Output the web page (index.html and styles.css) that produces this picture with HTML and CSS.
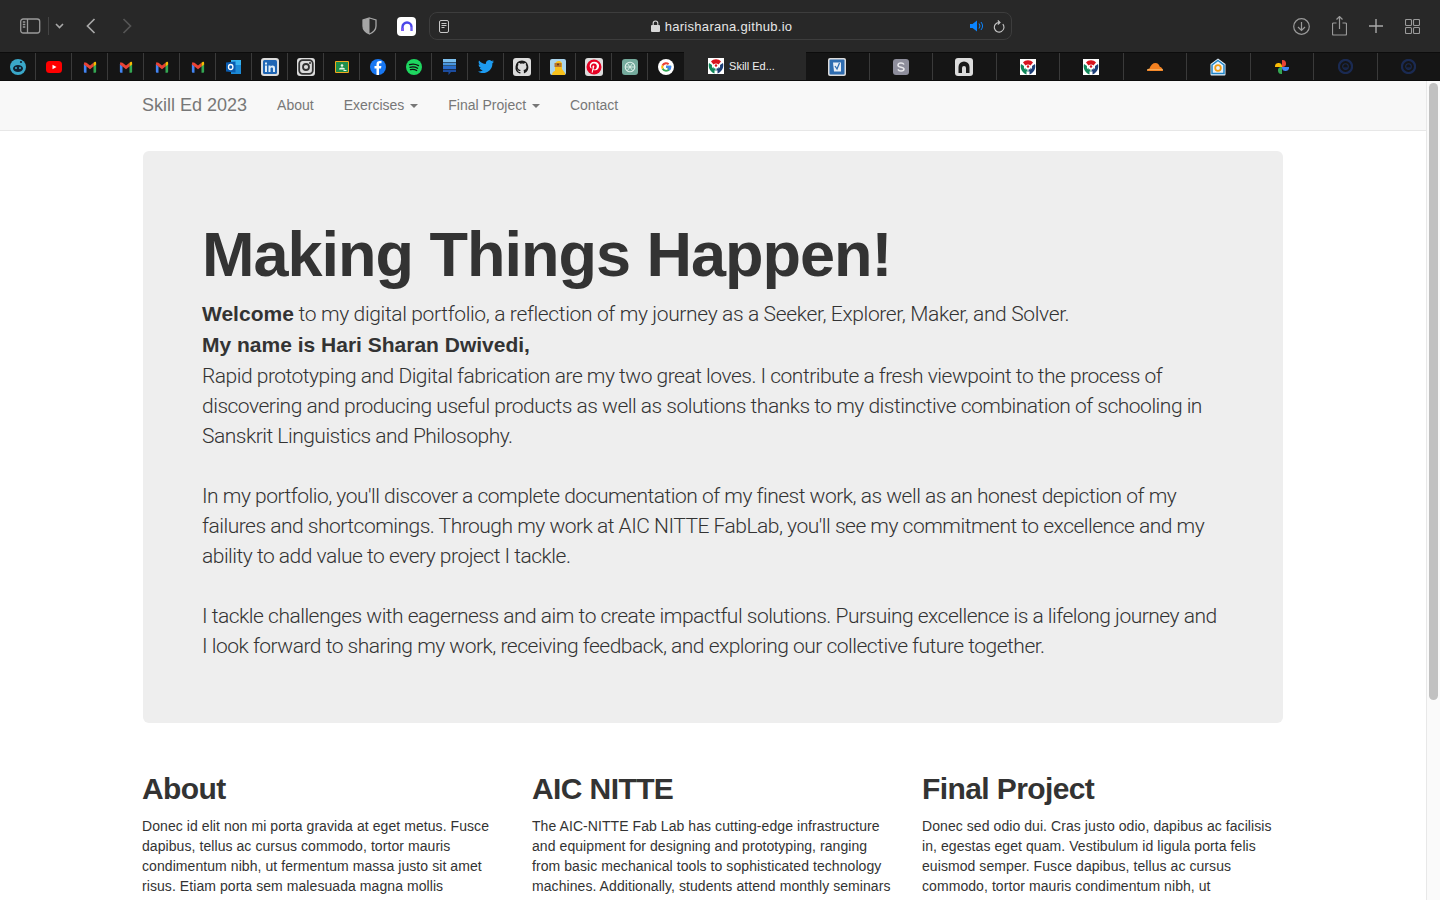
FILE: index.html
```html
<!DOCTYPE html>
<html>
<head>
<meta charset="utf-8">
<title>Skill Ed 2023</title>
<link rel="stylesheet" href="styles.css">
</head>
<body>

<svg class="defs" width="0" height="0">
  <symbol id="gmail" viewBox="0 0 16 13">
    <path d="M1 13V3l3 2.300V13H2a1 1 0 0 1-1-1z" fill="#4285f4"/>
    <path d="M12 13V5.300l3-2.300v9a1 1 0 0 1-1 1z" fill="#34a853"/>
    <path d="M1 3.500 1.500 1.200 4 1.700 8 4.800 12 1.700 12 6 8 9 4 6 1 3.500z" fill="#ea4335"/>
    <path d="M12 1.700 13.200.8c1-.6 1.800.2 1.800 1.200v1.500L12 6z" fill="#fbbc04"/>
  </symbol>
  <symbol id="fablab" viewBox="0 0 16 16">
    <rect width="16" height="16" fill="#fff"/>
    <path d="M3 3.500C5.500.5 10.500.5 13 3.500L10.500 6.500C9 5 7 5 5.500 6.500z" fill="#d8141f"/>
    <path d="M1 5C0 9 1.500 13.500 6.500 15.500V11.500C4.500 10.500 3.500 8.500 4 7z" fill="#10875a"/>
    <path d="M15 5C16 9 14.500 13.500 9.500 15.500V11.500C11.500 10.500 12.500 8.500 12 7z" fill="#1d3f78"/>
    <circle cx="8" cy="7.500" r="1.200" fill="#d8141f"/>
    <path d="M5 8.500C5.500 10 6.500 10.500 7.500 10.500V13C5.500 12.500 5 10.500 5 8.500z" fill="#10875a"/>
    <path d="M11 8.500C10.500 10 9.500 10.500 8.500 10.500V13C10.500 12.500 11 10.500 11 8.500z" fill="#1d3f78"/>
  </symbol>
  <symbol id="onepass" viewBox="0 0 16 16">
    <circle cx="8" cy="8" r="7" fill="none" stroke="#1a2a52" stroke-width="2.400"/>
    <circle cx="8" cy="8" r="3" fill="none" stroke="#1a2a52" stroke-width="1.200"/>
    <rect x="6" y="9" width="4" height="1.300" fill="#1a2a52"/>
  </symbol>
</svg>

<div class="toolbar">
  <svg class="sidebar-icon" width="21" height="16" viewBox="0 0 21 16" fill="none" stroke="#9a9a9a" stroke-width="1.300">
    <rect x=".7" y="1" width="19" height="14" rx="2.500"/>
    <path d="M7.500 1v14"/>
    <path d="M2.800 4h2.500M2.800 6.500h2.500M2.800 9h2.500"/>
  </svg>
  <span class="tool-divider"></span>
  <svg class="chevron-icon" width="9" height="6" viewBox="0 0 9 6" fill="none" stroke="#a8a8a8" stroke-width="1.600"><path d="M1 1l3.500 3.500L8 1"/></svg>
  <svg class="back-icon" width="10" height="16" viewBox="0 0 10 16" fill="none" stroke="#a8a8a8" stroke-width="1.700"><path d="M8.500 1 1.500 8l7 7"/></svg>
  <svg class="forward-icon" width="10" height="16" viewBox="0 0 10 16" fill="none" stroke="#555" stroke-width="1.700"><path d="M1.500 1l7 7-7 7"/></svg>
  <svg class="shield-icon" width="15" height="18" viewBox="0 0 15 18"><path d="M7.500 1 14 3v6c0 4-3 6.500-6.500 8C4 15.500 1 13 1 9V3z" fill="none" stroke="#a6a6a6" stroke-width="1.300"/><path d="M7.500 1 1 3v6c0 4 3 6.500 6.500 8z" fill="#a6a6a6"/></svg>
  <span class="ext-n">
    <svg width="14" height="12" viewBox="0 0 14 12" fill="none"><path d="M2.500 11V7a4.500 4.500 0 0 1 9 0" stroke="#4a46e8" stroke-width="2.400"/><path d="M11.500 7v4" stroke="#6a5cf0" stroke-width="2.400"/><rect x="1" y="8" width="3" height="3" fill="#7a5cf5"/></svg>
  </span>
  <div class="urlbar">
    <svg class="reader-icon" width="10" height="13" viewBox="0 0 10 13" fill="none" stroke="#c9c9c9" stroke-width="1"><rect x=".5" y=".5" width="9" height="12" rx="1.500"/><path d="M2.500 3.500h5M2.500 5.500h5M2.500 7.500h3"/></svg>
    <div class="url-text">
      <svg width="9" height="12" viewBox="0 0 9 12"><path d="M2.200 5V3.300a2.300 2.300 0 0 1 4.600 0V5" fill="none" stroke="#d8d8d8" stroke-width="1.100"/><rect y="5" width="9" height="7" rx="1" fill="#d8d8d8"/></svg>
      harisharana.github.io
    </div>
    <svg class="speaker-icon" width="14" height="12" viewBox="0 0 14 12"><path d="M0 4h2.500L7 .5v11L2.500 8H0z" fill="#0a84ff"/><path d="M9 3.500a4 4 0 0 1 0 5M11 2a6.500 6.500 0 0 1 0 8" fill="none" stroke="#0a84ff" stroke-width="1"/></svg>
    <svg class="reload-icon" width="12" height="13" viewBox="0 0 12 13" fill="none" stroke="#c9c9c9" stroke-width="1.100"><path d="M9.800 4.200A4.800 4.800 0 1 1 6 2.500"/><path d="M4.800.5 7 2.500 4.800 4.500"/></svg>
  </div>
  <div class="tool-right">
    <svg width="17" height="17" viewBox="0 0 17 17" fill="none" stroke="#9a9a9a" stroke-width="1.200"><circle cx="8.500" cy="8.500" r="7.800"/><path d="M8.500 4v8.500M5 9l3.500 3.500L12 9"/></svg>
    <svg width="15" height="20" viewBox="0 0 15 20" fill="none" stroke="#9a9a9a" stroke-width="1.200"><path d="M4.500 7H1.500a1 1 0 0 0-1 1v10a1 1 0 0 0 1 1h12a1 1 0 0 0 1-1V8a1 1 0 0 0-1-1h-3"/><path d="M7.500 13V1M4.500 3.500l3-3 3 3"/></svg>
    <svg width="14" height="14" viewBox="0 0 14 14" fill="none" stroke="#a8a8a8" stroke-width="1.400"><path d="M7 0v14M0 7h14"/></svg>
    <svg width="15" height="15" viewBox="0 0 15 15" fill="none" stroke="#9a9a9a" stroke-width="1.100"><rect x=".5" y=".5" width="6" height="6" rx="1"/><rect x="8.500" y=".5" width="6" height="6" rx="1"/><rect x=".5" y="8.500" width="6" height="6" rx="1"/><rect x="8.500" y="8.500" width="6" height="6" rx="1"/></svg>
  </div>
</div>

<div class="tabbar">
  <div class="pinned-tabs">
    <!-- pinned tabs -->
    <div class="pin"><svg width="16" height="16" viewBox="0 0 16 16"><circle cx="8" cy="8" r="8" fill="#3aa8c9"/><ellipse cx="8" cy="9.500" rx="5" ry="3.500" fill="#123"/><circle cx="6" cy="9" r="1" fill="#3aa8c9"/><circle cx="10" cy="9" r="1" fill="#3aa8c9"/><circle cx="11" cy="3" r="1.100" fill="#123"/></svg></div>
    <div class="pin"><svg width="16" height="12" viewBox="0 0 16 12"><rect width="16" height="12" rx="3.500" fill="#f00"/><path d="M6.500 3.800v4.400L10.500 6z" fill="#fff"/></svg></div>
    <div class="pin"><svg width="14" height="12"><use href="#gmail"/></svg></div>
    <div class="pin"><svg width="14" height="12"><use href="#gmail"/></svg></div>
    <div class="pin"><svg width="14" height="12"><use href="#gmail"/></svg></div>
    <div class="pin"><svg width="14" height="12"><use href="#gmail"/></svg></div>
    <div class="pin"><svg width="16" height="16" viewBox="0 0 16 16"><path d="M5 1h10v14H5z" fill="#1c8ad6"/><path d="M5 1h10v5H5z" fill="#36b2ee"/><path d="M0 3.500 9.500 2.500v11L0 12.500z" fill="#0a5cb0"/><ellipse cx="4.700" cy="8" rx="2.200" ry="2.500" fill="none" stroke="#fff" stroke-width="1.300"/></svg></div>
    <div class="pin"><svg width="18" height="18" viewBox="0 0 18 18"><rect width="18" height="18" rx="3" fill="#dcdcdc"/><rect x="2" y="2" width="14" height="14" rx="1.500" fill="#1f66b5"/><path d="M4 7.500h2V14H4zM4 4.500h2v2H4zM7.500 7.500h2v1c1-1.500 4.500-1.500 4.500 1.500v4h-2v-3.500c0-1.500-2.500-1.500-2.500 0V14h-2z" fill="#dcecf8"/></svg></div>
    <div class="pin"><svg width="18" height="18" viewBox="0 0 18 18"><rect width="18" height="18" rx="3" fill="#dcdcdc"/><rect x="2.200" y="2.200" width="13.600" height="13.600" rx="3.500" fill="none" stroke="#333" stroke-width="1.800"/><circle cx="9" cy="9" r="3" fill="none" stroke="#333" stroke-width="1.800"/><circle cx="13" cy="5" r="1" fill="#333"/></svg></div>
    <div class="pin"><svg width="14" height="12" viewBox="0 0 14 12"><rect width="14" height="12" rx="1" fill="#f0a81e"/><rect x="1" y="1" width="12" height="10" fill="#1e8e4a"/><circle cx="7" cy="4.500" r="1.300" fill="#e8f5e9"/><path d="M4 8.500a3 2 0 0 1 6 0z" fill="#e8f5e9"/><rect x="8.500" y="9" width="3" height="1" fill="#e8f5e9"/></svg></div>
    <div class="pin"><svg width="16" height="16" viewBox="0 0 16 16"><circle cx="8" cy="8" r="8" fill="#1877f2"/><path d="M9 16V9.500h2l.4-2.500H9V5.500C9 4.700 9.300 4.200 10.400 4.200h1.100V2.100C11 2 10.300 2 9.700 2 7.700 2 6.500 3.200 6.500 5.200V7H4.500v2.500h2V16z" fill="#fff"/></svg></div>
    <div class="pin"><svg width="16" height="16" viewBox="0 0 16 16" fill="none"><circle cx="8" cy="8" r="8" fill="#1ed760"/><path d="M3.500 5.700c3-.9 6.300-.6 9 .9M4 8.300c2.600-.7 5.300-.4 7.600.9M4.500 10.700c2.100-.6 4.300-.3 6.200.8" stroke="#111" stroke-width="1.300" stroke-linecap="round"/></svg></div>
    <div class="pin"><svg width="13" height="16" viewBox="0 0 13 16"><rect width="13" height="3" fill="#7cc0f0"/><rect y="3.500" width="13" height="3" fill="#4a98e0"/><rect y="7" width="13" height="3" fill="#2a6cc8"/><path d="M0 10.500h13V13H8l-2.500 3V13H0z" fill="#1c4c9e"/></svg></div>
    <div class="pin"><svg width="16" height="13" viewBox="0 0 16 13"><path d="M16 1.600c-.6.300-1.200.4-1.900.5.700-.4 1.200-1 1.400-1.800-.6.400-1.300.6-2 .8a3.300 3.300 0 0 0-5.600 3C5.200 4 2.800 2.700 1.100.6c-.9 1.500-.4 3.400 1 4.400-.5 0-1-.2-1.500-.4 0 1.600 1.100 3 2.600 3.300-.5.100-1 .1-1.500 0 .4 1.300 1.600 2.200 3.100 2.300A6.600 6.600 0 0 1 0 11.500 9.300 9.300 0 0 0 14.400 3.300c.6-.5 1.200-1 1.600-1.700z" fill="#1d9bf0"/></svg></div>
    <div class="pin"><svg width="18" height="18" viewBox="0 0 18 18"><rect width="18" height="18" rx="3" fill="#dcdcdc"/><path d="M9 2.500a6.700 6.700 0 0 0-2.100 13c.3.100.5-.1.500-.3v-1.300c-1.900.4-2.300-.8-2.300-.8-.3-.8-.8-1-.8-1-.6-.4 0-.4 0-.4.700 0 1 .7 1 .7.600 1 1.600.7 2 .5.100-.4.200-.7.400-.9-1.500-.2-3-.7-3-3.300 0-.7.300-1.300.7-1.800-.1-.2-.3-.9.100-1.800 0 0 .6-.2 1.900.7a6.400 6.400 0 0 1 3.400 0c1.300-.9 1.900-.7 1.900-.7.400.9.200 1.600.1 1.800.4.500.7 1.100.7 1.800 0 2.600-1.600 3.100-3 3.300.2.200.4.600.4 1.200v1.800c0 .2.200.4.500.3A6.700 6.700 0 0 0 9 2.500z" fill="#1b1b1b"/></svg></div>
    <div class="pin"><svg width="16" height="16" viewBox="0 0 16 16"><rect width="16" height="16" rx="2" fill="#a9d4ec"/><path d="M2 16c0-3 2-4 3-4V5.500C5 3 7 1.500 10 2l2 2v6l3 4v2z" fill="#f7c11d"/><path d="M4.500 4h7v4h-7z" fill="#b8742a"/><circle cx="8" cy="5.500" r="1" fill="#5b3a16"/></svg></div>
    <div class="pin"><svg width="18" height="18" viewBox="0 0 18 18"><rect width="18" height="18" rx="3" fill="#dcdcdc"/><circle cx="9" cy="9" r="7.500" fill="#e60023"/><path d="M9.300 3.800c-3 0-4.600 2-4.600 4 0 1 .5 2.200 1.400 2.600.3.100.3 0 .4-.5 0-.2 0-.3-.1-.5-.9-1.100-.4-3.900 2.600-3.900 2.200 0 3 1.500 2.800 3-.2 1.700-1 3-2.100 3-.6 0-1.100-.5-1-1.100.2-.8.600-1.600.6-2.100 0-1.300-1.800-1.100-1.800.6 0 .5.200.9.200.9l-.8 3.200c-.2.900 0 2 0 2.300.5-.5 1-1.700 1.200-2.400l.4-1.500c.3.500 1 .9 1.800.9 2.300 0 3.800-2 3.800-4.500 0-2.300-2-4-4.800-4z" fill="#fff"/></svg></div>
    <div class="pin"><svg width="16" height="16" viewBox="0 0 16 16" fill="none"><rect width="16" height="16" rx="3" fill="#74aa9c"/><circle cx="8" cy="8" r="4.800" stroke="#dff0ea" stroke-width="1.100"/><path d="M5.500 4.500 10.500 11.500M10.500 4.500 5.500 11.500M3.500 8h9" stroke="#dff0ea" stroke-width=".9"/></svg></div>
    <div class="pin"><svg width="16" height="16" viewBox="0 0 16 16"><circle cx="8" cy="8" r="8" fill="#fff"/><path d="M8 6.800h5.200c.3 3-1.900 6-5.200 6a4.800 4.800 0 0 1-4.200-2.500L5.500 9a2.900 2.900 0 0 0 4.700 1.100L8 8.500z" fill="#34a853"/><path d="M13.200 6.800H8v2h2.800a2.900 2.900 0 0 1-.8 1.400l1.800 1.400c1.300-1.200 1.700-3 1.400-4.800z" fill="#4285f4"/><path d="M3.800 5.700 5.500 7a2.900 2.900 0 0 0 0 2l-1.700 1.300a4.800 4.800 0 0 1 0-4.600z" fill="#fbbc04"/><path d="M3.800 5.700A4.800 4.800 0 0 1 11.300 4.600L9.900 6A2.900 2.900 0 0 0 5.500 7z" fill="#ea4335"/></svg></div>
  </div>
  <div class="active-tab">
    <svg width="16" height="16"><use href="#fablab"/></svg>
    <span>Skill Ed...</span>
  </div>
  <div class="tab"><svg width="18" height="18" viewBox="0 0 18 18"><rect width="18" height="18" rx="2" fill="#dcdcdc"/><rect x="1.500" y="1.500" width="15" height="15" rx="1" fill="#2e6cb0"/><path d="M5 4.500h8v9H6z" fill="#e8eef6"/><path d="M7 8l2 3 2.500-6" fill="none" stroke="#2e6cb0" stroke-width="1.300"/></svg></div>
  <div class="tab"><svg width="16" height="16" viewBox="0 0 16 16"><rect width="16" height="16" rx="3" fill="#8e8e9c"/><path d="M11 5.500C10.500 4.500 9.300 4 8 4 6.300 4 5 4.800 5 6.200 5 9 11 7.500 11 10c0 1.300-1.300 2-3 2-1.400 0-2.600-.6-3.100-1.600" fill="none" stroke="#e8e8ec" stroke-width="1.500"/></svg></div>
  <div class="tab"><svg width="18" height="18" viewBox="0 0 18 18"><rect width="18" height="18" rx="3" fill="#dcdcdc"/><path d="M3.500 15V9a5.500 5.500 0 0 1 11 0v6h-3.500V10a2 2 0 0 0-4 0v5z" fill="#1a1a1a"/></svg></div>
  <div class="tab"><svg width="16" height="16"><use href="#fablab"/></svg></div>
  <div class="tab"><svg width="16" height="16"><use href="#fablab"/></svg></div>
  <div class="tab"><svg width="16" height="8" viewBox="0 0 16 8"><path d="M0 8c0-1.500 1-2.500 2.500-2.500C3.500 2 6 0 8.500 0c2.200 0 3.700 1.500 4.300 3.800 1.800 0 3.200 2.300 3.200 4.200z" fill="#f48120"/><rect x="0" y="6.500" width="16" height=".6" fill="#fbd38d"/></svg></div>
  <div class="tab"><svg width="16" height="18" viewBox="0 0 16 18"><path d="M8 .5 15.500 6v10.500a1 1 0 0 1-1 1h-13a1 1 0 0 1-1-1V6z" fill="#e8f2fa"/><path d="M8 2.500 14 7v8.500H2V7z" fill="none" stroke="#1f84c6" stroke-width="1.500"/><circle cx="8" cy="10" r="2.800" fill="none" stroke="#f39c12" stroke-width="1.800"/></svg></div>
  <div class="tab"><svg width="14" height="16" viewBox="0 0 14 16"><path d="M7 8H0a3.500 3.500 0 0 1 7-1z" fill="#fbbc04"/><path d="M7 8V1a3.500 3.500 0 0 1 1 7z" fill="#ea4335"/><path d="M7 8h7a3.500 3.500 0 0 1-7 1z" fill="#4285f4"/><path d="M7 8v7a3.500 3.500 0 0 1-1-7z" fill="#34a853"/></svg></div>
  <div class="tab"><svg width="15" height="15"><use href="#onepass"/></svg></div>
  <div class="tab"><svg width="15" height="15"><use href="#onepass"/></svg></div>
</div>

<div class="window">
  <div class="page">
    <nav class="navbar">
      <div class="container nav-row">
        <a class="brand">Skill Ed 2023</a>
        <a class="nav-link">About</a>
        <a class="nav-link">Exercises <span class="caret"></span></a>
        <a class="nav-link">Final Project <span class="caret"></span></a>
        <a class="nav-link">Contact</a>
      </div>
    </nav>

    <div class="container">
      <div class="jumbotron">
        <h1>Making Things Happen!</h1>
        <p class="lead-line"><strong>Welcome</strong> to my digital portfolio, a reflection of my journey as a Seeker, Explorer, Maker, and Solver.</p>
        <p class="lead-line"><strong>My name is Hari Sharan Dwivedi,</strong></p>
        <p>Rapid prototyping and Digital fabrication are my two great loves. I contribute a fresh viewpoint to the process of discovering and producing useful products as well as solutions thanks to my distinctive combination of schooling in Sanskrit Linguistics and Philosophy.</p>
        <p>In my portfolio, you'll discover a complete documentation of my finest work, as well as an honest depiction of my failures and shortcomings. Through my work at AIC NITTE FabLab, you'll see my commitment to excellence and my ability to add value to every project I tackle.</p>
        <p>I tackle challenges with eagerness and aim to create impactful solutions. Pursuing excellence is a lifelong journey and I look forward to sharing my work, receiving feedback, and exploring our collective future together.</p>
      </div>

      <div class="columns">
        <div class="col">
          <h2>About</h2>
          <p>Donec id elit non mi porta gravida at eget metus. Fusce dapibus, tellus ac cursus commodo, tortor mauris condimentum nibh, ut fermentum massa justo sit amet risus. Etiam porta sem malesuada magna mollis</p>
        </div>
        <div class="col">
          <h2>AIC NITTE</h2>
          <p>The AIC-NITTE Fab Lab has cutting-edge infrastructure and equipment for designing and prototyping, ranging from basic mechanical tools to sophisticated technology machines. Additionally, students attend monthly seminars</p>
        </div>
        <div class="col">
          <h2>Final Project</h2>
          <p>Donec sed odio dui. Cras justo odio, dapibus ac facilisis in, egestas eget quam. Vestibulum id ligula porta felis euismod semper. Fusce dapibus, tellus ac cursus commodo, tortor mauris condimentum nibh, ut</p>
        </div>
      </div>
    </div>
  </div>

  <div class="scrolltrack"><div class="scrollthumb"></div></div>
</div>

</body>
</html>
```

FILE: styles.css
```css
html, body {
margin: 0;
height: 900px;
overflow: hidden;
}

body {
display: flex;
flex-direction: column;
font-family: "Liberation Sans", Arial, sans-serif;
font-size: 14px;
color: #333;
background: white;
}

a {
text-decoration: none;
}

.defs {
position: absolute;
}

/* browser toolbar */
.toolbar {
height: 52px;
flex: none;
display: flex;
align-items: center;
background: #282828;
box-sizing: border-box;
padding-left: 20px;
}

.tool-divider {
width: 1px;
height: 18px;
background: #444;
margin-left: 7px;
}

.chevron-icon {
margin-left: 6px;
}

.back-icon {
margin-left: 22px;
}

.forward-icon {
margin-left: 26px;
}

.shield-icon {
margin-left: 230px;
}

.ext-n {
width: 19px;
height: 19px;
margin-left: 20px;
border-radius: 4px;
background: white;
display: flex;
align-items: center;
justify-content: center;
}

.urlbar {
width: 583px;
height: 28px;
margin-left: 13px;
box-sizing: border-box;
border: 1px solid #3d3d3d;
border-radius: 8px;
background: #282828;
display: flex;
align-items: center;
padding-left: 9px;
padding-right: 6px;
}

.url-text {
flex: 1;
display: flex;
align-items: center;
justify-content: center;
gap: 5px;
color: #e6e6e6;
font-size: 13px;
font-weight: 500;
letter-spacing: .3px;
padding-left: 24px;
}

.reload-icon {
margin-left: 9px;
}

.tool-right {
flex: 1;
display: flex;
align-items: center;
justify-content: flex-end;
gap: 22px;
padding-right: 20px;
}

/* tabs */
.tabbar {
height: 29px;
flex: none;
display: flex;
box-sizing: border-box;
background: #151515;
border-top: 1px solid #0c0c0c;
border-bottom: 1px solid #0c0c0c;
}

.pinned-tabs {
display: flex;
}

.pin {
width: 36px;
box-sizing: border-box;
border-right: 1px solid #3a3a3a;
display: flex;
align-items: center;
justify-content: center;
}

.pin:last-child {
border-right: none;
}

.active-tab {
width: 122px;
box-sizing: border-box;
padding-right: 7px;
background: #282828;
display: flex;
align-items: center;
justify-content: center;
gap: 5px;
color: #f0f0f0;
font-size: 11px;
margin-top: -1px;
}

.tab {
flex: 1;
box-sizing: border-box;
border-right: 1px solid #3a3a3a;
display: flex;
align-items: center;
justify-content: center;
}

.tab:last-child {
border-right: none;
}

/* page in the window */
.window {
flex: 1;
min-height: 0;
display: flex;
}

.page {
width: 1426px;
height: 819px;
overflow: hidden;
}

.scrolltrack {
width: 14px;
box-sizing: border-box;
background: #fafafa;
border-left: 1px solid #e8e8e8;
padding: 2px 2px 0 2px;
}

.scrollthumb {
height: 617px;
background: #c1c1c1;
border-radius: 5px;
}

.container {
width: 1140px;
margin: 0 auto;
}

.navbar {
height: 50px;
box-sizing: border-box;
background: #f8f8f8;
border-bottom: 1px solid #e7e7e7;
}

.nav-row {
display: flex;
align-items: center;
height: 48px;
}

.brand {
font-size: 18px;
color: #777;
margin-left: -1px;
margin-right: 15px;
}

.nav-link {
color: #777;
padding: 0 15px;
}

.caret {
display: inline-block;
width: 0;
height: 0;
margin-left: 2px;
vertical-align: middle;
border-top: 4px solid #777;
border-left: 4px solid transparent;
border-right: 4px solid transparent;
}

.jumbotron {
margin-top: 20px;
padding: 60px;
height: 572px;
box-sizing: border-box;
background: #eee;
border-radius: 6px;
}

.jumbotron h1 {
font-size: 63px;
font-weight: 700;
line-height: 69px;
margin: 9px 0 10px -1px;
letter-spacing: -1px;
}

.jumbotron p {
font-family: Roboto, "Liberation Sans", sans-serif;
font-weight: 300;
font-size: 21px;
line-height: 30px;
margin: 0 0 30px -1px;
color: #333;
letter-spacing: -.5px;
}

.jumbotron p.lead-line {
margin-bottom: 1px;
letter-spacing: -.36px;
}

.jumbotron strong {
font-family: "Liberation Sans", Arial, sans-serif;
font-weight: 700;
letter-spacing: 0;
color: #333;
}

.columns {
display: grid;
grid-template-columns: repeat(3, 360px);
gap: 30px;
margin-left: -1px;
margin-top: 49px;
}

.col h2 {
font-size: 30px;
font-weight: 700;
line-height: 33px;
margin: 0 0 11px;
letter-spacing: -.6px;
}

.col p {
margin: 0;
line-height: 20px;
letter-spacing: .07px;
}
```
